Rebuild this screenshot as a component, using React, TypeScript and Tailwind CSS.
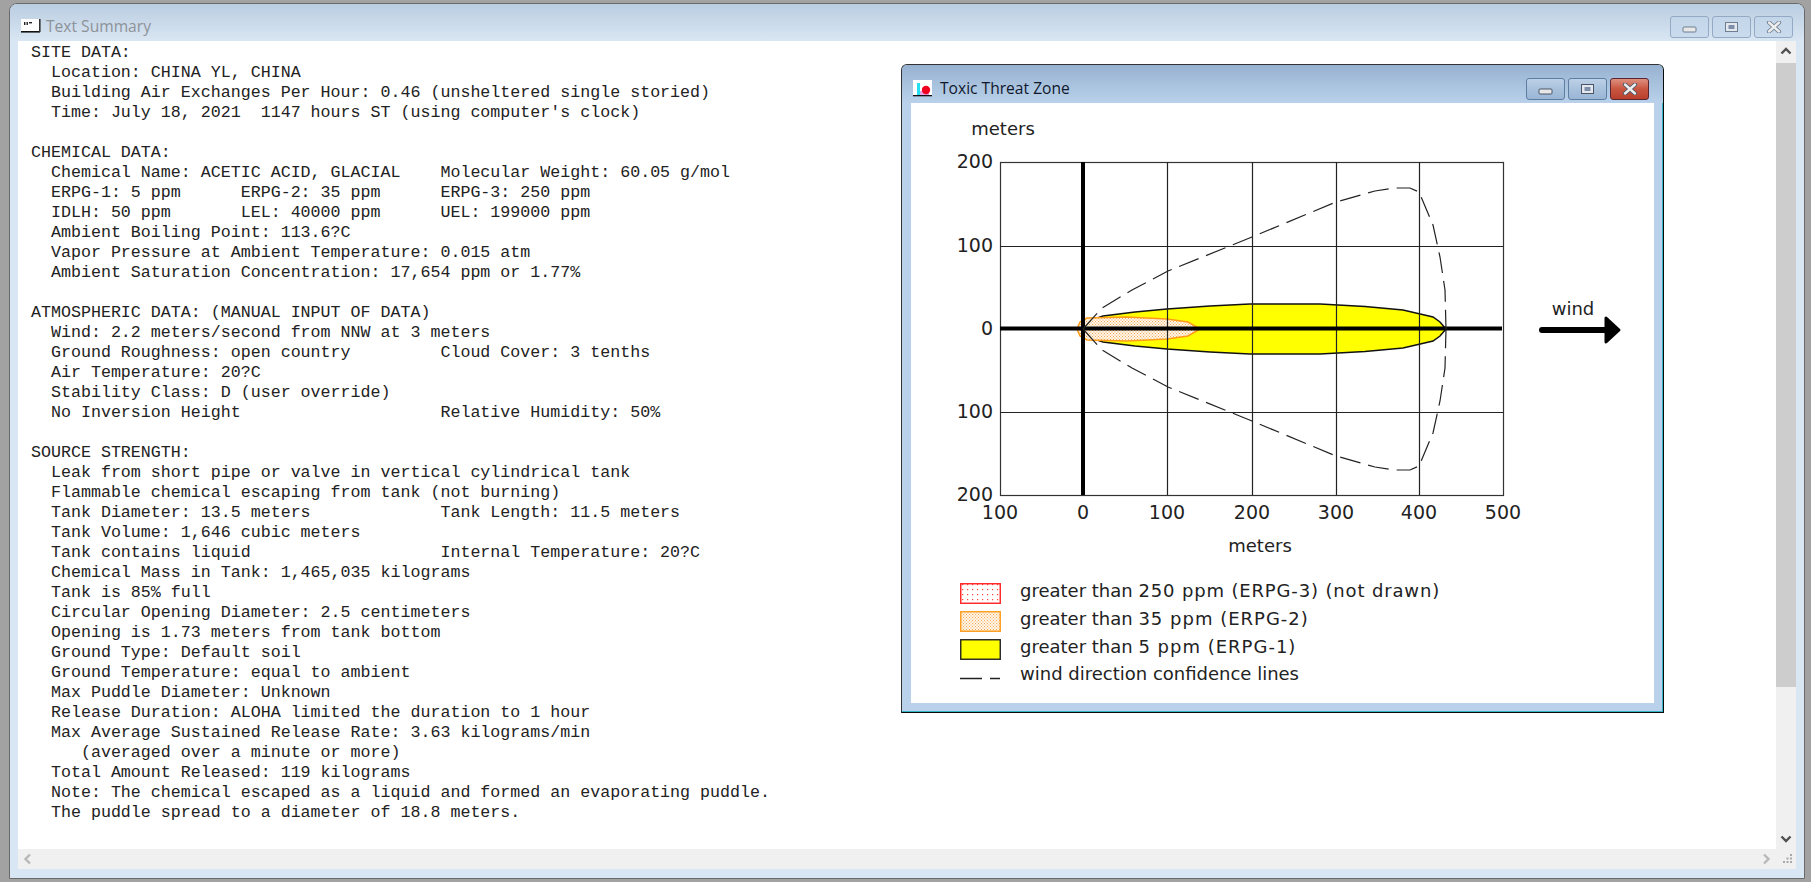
import React from 'react';

const SUMMARY = `SITE DATA:
  Location: CHINA YL, CHINA
  Building Air Exchanges Per Hour: 0.46 (unsheltered single storied)
  Time: July 18, 2021  1147 hours ST (using computer's clock)

CHEMICAL DATA:
  Chemical Name: ACETIC ACID, GLACIAL    Molecular Weight: 60.05 g/mol
  ERPG-1: 5 ppm      ERPG-2: 35 ppm      ERPG-3: 250 ppm
  IDLH: 50 ppm       LEL: 40000 ppm      UEL: 199000 ppm
  Ambient Boiling Point: 113.6?C
  Vapor Pressure at Ambient Temperature: 0.015 atm
  Ambient Saturation Concentration: 17,654 ppm or 1.77%

ATMOSPHERIC DATA: (MANUAL INPUT OF DATA)
  Wind: 2.2 meters/second from NNW at 3 meters
  Ground Roughness: open country         Cloud Cover: 3 tenths
  Air Temperature: 20?C
  Stability Class: D (user override)
  No Inversion Height                    Relative Humidity: 50%

SOURCE STRENGTH:
  Leak from short pipe or valve in vertical cylindrical tank
  Flammable chemical escaping from tank (not burning)
  Tank Diameter: 13.5 meters             Tank Length: 11.5 meters
  Tank Volume: 1,646 cubic meters
  Tank contains liquid                   Internal Temperature: 20?C
  Chemical Mass in Tank: 1,465,035 kilograms
  Tank is 85% full
  Circular Opening Diameter: 2.5 centimeters
  Opening is 1.73 meters from tank bottom
  Ground Type: Default soil
  Ground Temperature: equal to ambient
  Max Puddle Diameter: Unknown
  Release Duration: ALOHA limited the duration to 1 hour
  Max Average Sustained Release Rate: 3.63 kilograms/min
     (averaged over a minute or more)
  Total Amount Released: 119 kilograms
  Note: The chemical escaped as a liquid and formed an evaporating puddle.
  The puddle spread to a diameter of 18.8 meters.`;

const CHART_FONT = '"DejaVu Sans", sans-serif';

// yellow plume outline, upper half, mirrored around y=329
const plumeTop: [number, number][] = [
  [1077, 329], [1083, 323], [1103, 316], [1135, 312], [1167, 309], [1210, 306], [1250, 304], [1320, 304],
  [1365, 306.5], [1403, 310], [1433, 317], [1440, 322], [1446, 329],
];
const orangeTop: [number, number][] = [
  [1077, 329], [1080, 322], [1087, 318], [1127, 317], [1167, 319], [1188, 322], [1200, 329],
];
const confidenceTop: [number, number][] = [
  [1083, 329], [1102, 308], [1132, 290], [1168, 271], [1252, 237], [1336, 202], [1375, 191],
  [1395, 188], [1410, 188], [1419, 192], [1433, 225], [1440, 257], [1445, 290], [1446, 329],
];

const toPoints = (pts: [number, number][]) => pts.map(([x, y]) => `${x},${y}`).join(' ');
const mirror = (pts: [number, number][]) =>
  [...pts].reverse().map(([x, y]) => [x, 658 - y] as [number, number]);
const closed = (pts: [number, number][]) => toPoints([...pts, ...mirror(pts)]);

function CaptionGlyph({ type, inactive }: { type: 'min' | 'max' | 'close'; inactive?: boolean }) {
  const edge = inactive ? '#6f7f92' : '#4a5568';
  if (type === 'min') {
    return (
      <svg width="16" height="8" viewBox="0 0 16 8" className="mt-1.5">
        <rect x="1" y="1" width="13" height="5" rx="1" fill="#e8e8e8" stroke={edge} strokeWidth="1" />
      </svg>
    );
  }
  if (type === 'max') {
    return (
      <svg width="15" height="12" viewBox="0 0 15 12">
        <rect x="1.5" y="1.5" width="12" height="9" fill="#e4e8ee" stroke={edge} strokeWidth="1" />
        <rect x="4.5" y="4" width="6" height="4" fill="#7d8fa8" />
      </svg>
    );
  }
  return (
    <svg width="16" height="12" viewBox="0 0 16 12">
      <path d="M3 1.5 L13 10.5 M13 1.5 L3 10.5" stroke={edge} strokeWidth="4.2" strokeLinecap="round" />
      <path d="M3 1.5 L13 10.5 M13 1.5 L3 10.5" stroke="#eeeeee" strokeWidth="2.4" strokeLinecap="round" />
    </svg>
  );
}

function OuterCaption() {
  return (
    <div className="flex gap-[3px] pt-[1px]">
      {(['min', 'max', 'close'] as const).map((t) => (
        <div
          key={t}
          className="w-[39px] h-[22px] flex items-center justify-center rounded-[3px] border border-[#94a9c3] bg-gradient-to-b from-[#c3d5e8] to-[#c9dbed]"
        >
          <CaptionGlyph type={t} inactive />
        </div>
      ))}
    </div>
  );
}

function InnerCaption() {
  return (
    <div className="flex gap-[3px]">
      {(['min', 'max'] as const).map((t) => (
        <div
          key={t}
          className="w-[39px] h-[22px] flex items-center justify-center rounded-[3px] border border-[#5e7da3] bg-gradient-to-b from-[#bdd1e7] via-[#a8c1dc] to-[#9ab6d5]"
        >
          <CaptionGlyph type={t} />
        </div>
      ))}
      <div className="w-[39px] h-[22px] flex items-center justify-center rounded-[3px] border border-[#5c2430] bg-gradient-to-b from-[#dd8f7f] via-[#c8553f] to-[#b8402c]">
        <CaptionGlyph type="close" />
      </div>
    </div>
  );
}

function Chevron({ dir, color }: { dir: 'up' | 'down' | 'left' | 'right'; color: string }) {
  const d = {
    up: 'M1.5 7.5 L6 3 L10.5 7.5',
    down: 'M1.5 3.5 L6 8 L10.5 3.5',
    left: 'M8 1.5 L3.5 6 L8 10.5',
    right: 'M4 1.5 L8.5 6 L4 10.5',
  }[dir];
  return (
    <svg width="12" height="12" viewBox="0 0 12 12">
      <path d={d} fill="none" stroke={color} strokeWidth="2.4" />
    </svg>
  );
}

// fine staggered dots, same as the ERPG-2 fill in the plot
function OrangeDots({ id }: { id: string }) {
  return (
    <pattern id={id} width="3" height="3" patternUnits="userSpaceOnUse">
      <rect width="3" height="3" fill="#fff6ea" />
      <rect x="0" y="0" width="1" height="1" fill="#f7a850" />
      <rect x="1.5" y="1.5" width="1" height="1" fill="#f7a850" />
    </pattern>
  );
}

function ThreatChart() {
  const xs = [1167, 1252, 1336, 1419];
  const ys = [246, 412];
  const xLabels: [number, string][] = [
    [1000, '100'], [1083, '0'], [1167, '100'], [1252, '200'], [1336, '300'], [1419, '400'], [1503, '500'],
  ];
  const yLabels: [number, string][] = [[162, '200'], [246, '100'], [329, '0'], [412, '100'], [495, '200']];
  return (
    <svg viewBox="911 103 742 465" className="w-[742px] h-[465px] block" style={{ fontFamily: CHART_FONT }}>
      <defs>
        <OrangeDots id="orange-dots" />
      </defs>
      <text x="1003" y="135" textAnchor="middle" fontSize="18" fill="#222">meters</text>
      {yLabels.map(([y, t]) => (
        <text key={y} x="993" y={y + 6} textAnchor="end" fontSize="19" fill="#222">{t}</text>
      ))}
      {xLabels.map(([x, t]) => (
        <text key={x} x={x} y="519" textAnchor="middle" fontSize="19" fill="#222">{t}</text>
      ))}
      <text x="1260" y="552" textAnchor="middle" fontSize="18" fill="#222">meters</text>

      <polygon points={closed(plumeTop)} fill="#ffff00" stroke="#111" strokeWidth="1.5" />
      <polygon points={closed(orangeTop)} fill="url(#orange-dots)" stroke="#ff9c1a" strokeWidth="1.6" />

      <rect x="1000.5" y="162.5" width="503" height="333" fill="none" stroke="#333" strokeWidth="1.2" />
      {xs.map((x) => (
        <line key={x} x1={x + 0.5} y1="162" x2={x + 0.5} y2="495" stroke="#222" strokeWidth="1.2" />
      ))}
      {ys.map((y) => (
        <line key={y} x1="1000" y1={y + 0.5} x2="1503" y2={y + 0.5} stroke="#222" strokeWidth="1.2" />
      ))}
      <line x1="1083" y1="162" x2="1083" y2="495" stroke="#000" strokeWidth="4" />
      <line x1="1000" y1="328.5" x2="1502" y2="328.5" stroke="#000" strokeWidth="4" />

      <polyline points={toPoints(confidenceTop)} fill="none" stroke="#222" strokeWidth="1.2" strokeDasharray="21 8" />
      <polyline points={toPoints(mirror(confidenceTop).reverse())} fill="none" stroke="#222" strokeWidth="1.2" strokeDasharray="21 8" />

      <text x="1573" y="315" textAnchor="middle" fontSize="18" fill="#222">wind</text>
      <line x1="1542" y1="330" x2="1610" y2="330" stroke="#000" strokeWidth="6" strokeLinecap="round" />
      <path d="M1606 318 L1619 330 L1606 342 Z" fill="#000" stroke="#000" strokeWidth="3" strokeLinejoin="round" />
    </svg>
  );
}

function Swatch({ kind }: { kind: 'red' | 'orange' | 'yellow' | 'dash' }) {
  if (kind === 'dash') {
    return (
      <svg width="41" height="21" viewBox="0 0 41 21" className="block mt-[6px]">
        <path d="M0 12.5 H22 M30 12.5 H40" stroke="#222" strokeWidth="1.3" />
      </svg>
    );
  }
  const stroke = kind === 'red' ? '#ff2020' : kind === 'orange' ? '#ff9c1a' : '#222';
  const fill = kind === 'red' ? 'url(#red-dots)' : kind === 'orange' ? 'url(#orange-dots-s)' : '#ffff00';
  return (
    <svg width="41" height="21" viewBox="0 0 41 21" className="block mt-[6px]">
      <defs>
        {kind === 'red' && (
          <pattern id="red-dots" width="5" height="5" patternUnits="userSpaceOnUse">
            <rect width="5" height="5" fill="#ffffff" />
            <rect x="2" y="1" width="1.2" height="1.2" fill="#ff4040" />
          </pattern>
        )}
        {kind === 'orange' && <OrangeDots id="orange-dots-s" />}
      </defs>
      <rect x="0.75" y="0.75" width="39.5" height="19.5" fill={fill} stroke={stroke} strokeWidth="1.4" />
    </svg>
  );
}

const legend: { kind: 'red' | 'orange' | 'yellow' | 'dash'; head: string; tail: string; track: string }[] = [
  { kind: 'red', head: 'greater than ', tail: '250 ppm (ERPG-3) (not drawn)', track: 'tracking-[0.85px]' },
  { kind: 'orange', head: 'greater than ', tail: '35 ppm (ERPG-2)', track: 'tracking-[1px]' },
  { kind: 'yellow', head: 'greater than ', tail: '5 ppm (ERPG-1)', track: 'tracking-[1px]' },
  { kind: 'dash', head: 'wind direction confidence lines', tail: '', track: '' },
];

function ThreatWindow() {
  return (
    <div className="absolute left-[883px] top-[23px] w-[763px] h-[649px] flex flex-col rounded-t-[6px] border border-[#333] border-r-[#0a0a0a] border-b-[#0a0a0a] bg-[#b9d1ea] shadow-[inset_-1px_-1px_0_#35b5c9]">
      <div className="h-[38px] shrink-0 flex items-center pt-[9px] pl-[11px] pr-[14px] rounded-t-[5px] bg-gradient-to-b from-[#97b2d1] to-[#b9d1ea]">
        <svg width="20" height="17" viewBox="0 0 20 17" className="shrink-0">
          <rect x="0" y="0" width="19" height="15" fill="#ffffff" />
          <rect x="4" y="3" width="3" height="12" fill="#22e0f0" />
          <rect x="7" y="11" width="9" height="4" fill="#e8a0e8" />
          <circle cx="13" cy="10" r="4.2" fill="#f00020" />
          <rect x="0" y="15" width="19" height="1.3" fill="#111" />
        </svg>
        <span className="ml-[7px] text-[15.6px] text-[#10182c] font-['Open_Sans',sans-serif]">Toxic Threat Zone</span>
        <div className="ml-auto">
          <InnerCaption />
        </div>
      </div>
      <div className="mx-[9px] h-[600px] shrink-0 bg-white">
        <ThreatChart />
        <div className="pl-[49px] pt-[9px] flex flex-col">
          {legend.map((row) => (
            <div key={row.head + row.tail} className="h-[27.7px] flex items-center gap-[19px]">
              <Swatch kind={row.kind} />
              <span className="text-[18px] text-[#222] font-['DejaVu_Sans',sans-serif] whitespace-pre">
                {row.head}
                <span className={row.track}>{row.tail}</span>
              </span>
            </div>
          ))}
        </div>
      </div>
    </div>
  );
}

export default function App() {
  return (
    <div className="w-[1811px] h-[882px] overflow-hidden bg-[#a2a2a2] pl-[9px] pt-[3px]">
      <div className="w-[1796px] h-[876px] flex flex-col rounded-t-[8px] border border-[#6a6a6a] bg-[#d9e6f3]">
        <div className="h-[37px] shrink-0 flex items-center pl-[11px] pr-[11px] rounded-t-[7px] bg-gradient-to-b from-[#bacde1] to-[#d9e6f3]">
          <svg width="20" height="14" viewBox="0 0 20 14" className="shrink-0 mt-[7px]">
            <rect x="0" y="0" width="19" height="12" fill="#ffffff" />
            <rect x="3" y="3" width="1.4" height="3" fill="#222" />
            <rect x="5.5" y="3" width="1.4" height="3" fill="#222" />
            <rect x="8" y="3" width="3" height="1.4" fill="#222" />
            <rect x="0" y="12" width="19" height="1.6" fill="#111" />
            <rect x="18" y="0" width="1.6" height="13" fill="#333" />
          </svg>
          <span className="ml-[5px] mt-[8px] text-[15.6px] text-[#8d9298] font-['Open_Sans',sans-serif]">Text Summary</span>
          <div className="ml-auto self-start mt-[11px]">
            <OuterCaption />
          </div>
        </div>
        <div className="mx-[8px] h-[828px] shrink-0 flex flex-col">
          <div className="h-[808px] flex">
            <div className="relative w-[1759px] bg-white">
              <pre className="pl-[13px] pt-[2px] font-['Liberation_Mono',monospace] text-[16.65px] leading-[20px] text-[#222]">
                {SUMMARY}
              </pre>
              <ThreatWindow />
            </div>
            <div className="w-[20px] flex flex-col bg-[#f0f0f0]">
              <div className="h-[22px] flex items-center justify-center">
                <Chevron dir="up" color="#505050" />
              </div>
              <div className="h-[624px] bg-[#cdcdcd]" />
              <div className="flex-1" />
              <div className="h-[21px] flex items-center justify-center">
                <Chevron dir="down" color="#505050" />
              </div>
            </div>
          </div>
          <div className="h-[20px] flex items-center justify-between bg-[#f0f0f0]">
            <div className="pl-[4px]">
              <Chevron dir="left" color="#b8b8b8" />
            </div>
            <div className="flex items-center">
              <Chevron dir="right" color="#b8b8b8" />
              <svg width="20" height="20" viewBox="0 0 20 20" className="ml-[4px]">
                <g fill="#a8a8a8">
                  <rect x="14" y="5" width="2" height="2" />
                  <rect x="10.5" y="8.5" width="2" height="2" />
                  <rect x="14" y="8.5" width="2" height="2" />
                  <rect x="7" y="12" width="2" height="2" />
                  <rect x="10.5" y="12" width="2" height="2" />
                  <rect x="14" y="12" width="2" height="2" />
                </g>
              </svg>
            </div>
          </div>
        </div>
      </div>
    </div>
  );
}
